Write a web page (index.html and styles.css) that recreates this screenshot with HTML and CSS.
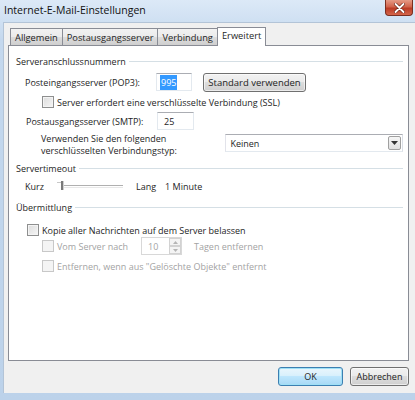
FILE: index.html
```html
<!DOCTYPE html>
<html lang="de">
<head>
    <meta charset="UTF-8">
    <title>Internet-E-Mail-Einstellungen</title>
    <link rel="stylesheet" href="styles.css">
</head>
<body>
    <div class="window">
        <div class="titlebar">
            <span class="title">Internet-E-Mail-Einstellungen</span>
            <div class="win-x">
                <svg width="11" height="10" viewBox="0 0 11 10">
                    <path d="M1.5 1 L9.5 9 M9.5 1 L1.5 9" stroke="#6b2418" stroke-width="3.2" stroke-linecap="round"/>
                    <path d="M1.5 1 L9.5 9 M9.5 1 L1.5 9" stroke="#fff" stroke-width="1.8" stroke-linecap="round"/>
                </svg>
            </div>
        </div>

        <div class="client">
            <div class="tabs">
                <div class="tab">Allgemein</div>
                <div class="tab">Postausgangsserver</div>
                <div class="tab">Verbindung</div>
                <div class="tab active">Erweitert</div>
            </div>

            <div class="panel">
                <div class="group-head h1"><span>Serveranschlussnummern</span></div>

                <div class="row pop3">
                    <span class="label w-pop">Posteingangsserver (POP3):</span>
                    <span class="textbox tb-pop"><span class="sel">995</span></span>
                    <span class="btn btn-std">Standard verwenden</span>
                </div>

                <div class="row ssl">
                    <span class="check"></span>
                    <span>Server erfordert eine verschlüsselte Verbindung (SSL)</span>
                </div>

                <div class="row smtp">
                    <span class="label w-smtp">Postausgangsserver (SMTP):</span>
                    <span class="textbox tb-smtp">25</span>
                </div>

                <div class="row verb">
                    <span class="verb-text">Verwenden Sie den folgenden<br>verschlüsselten Verbindungstyp:</span>
                    <span class="combo">
                        <span class="combo-val">Keinen</span>
                        <span class="combo-btn">
                            <svg width="7" height="4" viewBox="0 0 7 4"><path d="M0 0 H7 L3.5 4 Z" fill="#333"/></svg>
                        </span>
                    </span>
                </div>

                <div class="group-head h2"><span>Servertimeout</span></div>

                <div class="row slider-row">
                    <span class="s-kurz">Kurz</span>
                    <span class="slider">
                        <span class="track"></span>
                        <span class="tick"></span>
                        <span class="thumb"></span>
                    </span>
                    <span class="s-lang">Lang</span>
                    <span>1 Minute</span>
                </div>

                <div class="group-head h3"><span>Übermittlung</span></div>

                <div class="row kopie">
                    <span class="check"></span>
                    <span>Kopie aller Nachrichten auf dem Server belassen</span>
                </div>

                <div class="row vom disabled">
                    <span class="check off"></span>
                    <span class="w-vom">Vom Server nach</span>
                    <span class="spin">
                        <span class="spin-val">10</span>
                        <span class="spin-btns">
                            <span class="spin-b"><svg width="5" height="3" viewBox="0 0 5 3"><path d="M0 3 H5 L2.5 0 Z" fill="#b5b5b5"/></svg></span>
                            <span class="spin-b"><svg width="5" height="3" viewBox="0 0 5 3"><path d="M0 0 H5 L2.5 3 Z" fill="#b5b5b5"/></svg></span>
                        </span>
                    </span>
                    <span>Tagen entfernen</span>
                </div>

                <div class="row entf disabled">
                    <span class="check off"></span>
                    <span>Entfernen, wenn aus "Gelöschte Objekte" entfernt</span>
                </div>
            </div>

            <div class="footer">
                <span class="btn btn-ok">OK</span>
                <span class="btn btn-cancel">Abbrechen</span>
            </div>
        </div>
    </div>
</body>
</html>
```

FILE: styles.css
```css
body {
    margin: 0;
    font-family: "Open Sans", "Noto Sans", sans-serif;
    font-size: 9px;
    color: #1e1e1e;
    background: #c6d9ee;
}

.window {
    width: 415px;
    height: 400px;
    display: flex;
    flex-direction: column;
    background: linear-gradient(#dce9f7, #c4d8ee 40px, #bcd2ea);
}

.titlebar {
    height: 22px;
    position: relative;
}

.title {
    display: block;
    font-size: 10.5px;
    color: #111;
    padding: 3px 0 0 4px;
}

/* caption button sits over the title bar */
.win-x {
    position: absolute;
    top: 0;
    right: 2px;
    z-index: 5;
    width: 28px;
    height: 16px;
    box-sizing: border-box;
    border: 1px solid #7a2f21;
    border-top-width: 0;
    border-radius: 0 0 4px 4px;
    background: #c8503a linear-gradient(#e59a86, #d1634b 45%, #bb3b25 55%, #d4654a);
    display: flex;
    align-items: center;
    justify-content: center;
}

.client {
    flex: 1;
    margin: 0 0 7px 3px;
    background: #f0f0f0;
    border-top: 1px solid #b3c4d7;
    border-left: 1px solid #b3c4d7;
    display: flex;
    flex-direction: column;
}

.tabs {
    display: flex;
    margin: 4px 0 0 6px;
    height: 18px;
    align-items: flex-end;
}

.tab {
    height: 16px;
    padding: 0 4px;
    border: 1px solid #898c95;
    border-bottom: none;
    margin-right: -1px;
    background: linear-gradient(#f2f2f2, #ebebeb 50%, #dddddd 50%, #cfcfcf);
    display: flex;
    align-items: center;
    font-size: 9.3px;
}

.tab.active {
    height: 19px;
    background: #fff;
    position: relative;
    margin: 0 2px -1px 0;
    padding: 1px 4px 2px;
    align-items: flex-start;
    box-sizing: border-box;
    z-index: 1;
}

.panel {
    height: 316px;
    margin: 0 6px 0 4px;
    background: #fff;
    border: 1px solid #898c95;
    box-sizing: border-box;
    padding: 0 5px 0 7px;
}

.group-head {
    height: 13px;
    display: flex;
    align-items: center;
}

.group-head::after {
    content: "";
    flex: 1;
    border-top: 1px solid #d5dfe5;
    margin-left: 3px;
}

.h1 { margin-top: 9px; }
.h2 { margin-top: 3px; }
.h3 { margin-top: 8px; }

.row {
    display: flex;
    align-items: center;
}

.pop3 { height: 18px; margin-top: 5px; padding-left: 9px; }
.ssl { height: 14px; margin-top: 4px; padding-left: 26px; }
.smtp { height: 18px; margin-top: 3px; padding-left: 10px; }
.verb { height: 26px; margin-top: 3px; padding-left: 25px; align-items: flex-start; }
.slider-row { height: 14px; margin-top: 4px; padding-left: 9px; }
.kopie { height: 14px; margin-top: 9px; padding-left: 11px; }
.vom { height: 18px; margin-top: 0; padding-left: 26px; }
.entf { height: 14px; margin-top: 4px; padding-left: 26px; }

.w-pop { width: 131px; }
.w-smtp { width: 131px; }
.w-vom { width: 84px; }

.textbox {
    height: 18px;
    box-sizing: border-box;
    border: 1px solid #e3e9ef;
    border-top-color: #abadb3;
    display: flex;
    align-items: center;
    padding-left: 3px;
}

.tb-pop { width: 36px; }
.tb-smtp { width: 37px; padding-left: 6px; }

.sel {
    background: #3399ff;
    color: #fff;
    padding: 1px 1px;
}

.btn {
    box-sizing: border-box;
    height: 19px;
    border: 1px solid #707070;
    border-radius: 3px;
    background: linear-gradient(#f2f2f2, #ebebeb 45%, #dddddd 50%, #cfcfcf);
    display: flex;
    align-items: center;
    justify-content: center;
    box-shadow: inset 0 0 0 1px rgba(255, 255, 255, 0.6);
}

.btn-std {
    width: 103px;
    margin-left: 11px;
    font-size: 9.5px;
}

.check {
    width: 12px;
    height: 12px;
    box-sizing: border-box;
    border: 1px solid #8e8f8f;
    background: linear-gradient(135deg, #dcdcdc, #f6f6f6);
    box-shadow: inset 0 0 0 1px #f4f4f4;
    margin-right: 3px;
}

.check.off {
    border-color: #c8c8c8;
    background: #f4f4f4;
}

.verb-text {
    line-height: 12px;
    width: 187px;
}

.combo {
    width: 180px;
    height: 18px;
    box-sizing: border-box;
    border: 1px solid #abadb3;
    border-color: #abadb3 #dbdfe6 #e3e9ef #e2e3ea;
    display: flex;
    align-items: center;
    justify-content: space-between;
    margin-top: 1px;
}

.combo-val {
    padding-left: 4px;
}

.combo-btn {
    width: 13px;
    height: 14px;
    margin-right: 1px;
    border: 1px solid #a0a0a0;
    border-radius: 2px;
    box-sizing: border-box;
    background: linear-gradient(#f6f6f6, #e0e0e0);
    display: flex;
    align-items: center;
    justify-content: center;
}

.s-kurz { width: 32px; }
.s-lang { margin: 0 9px 0 13px; }

.slider {
    width: 66px;
    height: 14px;
    position: relative;
}

.track {
    position: absolute;
    left: 4px;
    right: 0;
    top: 6px;
    height: 1px;
    border-top: 1px solid #b0b0b0;
    border-bottom: 1px solid #e8e8e8;
}

.tick {
    position: absolute;
    left: 0;
    top: 3px;
    width: 5px;
    height: 2px;
    border-top: 1px solid #c8c8c8;
}

.thumb {
    position: absolute;
    left: 4px;
    top: 2px;
    width: 2px;
    height: 9px;
    background: #7a7a7a;
    border-right: 1px solid #d0d0d0;
}

.disabled {
    color: #a3a3a3;
}

.spin {
    width: 41px;
    height: 18px;
    box-sizing: border-box;
    border: 1px solid #d8d8d8;
    display: flex;
    justify-content: space-between;
    margin-right: 12px;
}

.spin-val {
    padding: 2px 0 0 6px;
}

.spin-btns {
    width: 12px;
    display: flex;
    flex-direction: column;
}

.spin-b {
    flex: 1;
    border: 1px solid #d2d2d2;
    background: #f4f4f4;
    display: flex;
    align-items: center;
    justify-content: center;
}

.footer {
    display: flex;
    justify-content: flex-end;
    margin: 6px 6px 0 0;
}

.btn-ok {
    width: 65px;
    border-color: #3c7fb1;
    box-shadow: inset 0 0 0 1px #9fe0f6;
    background: linear-gradient(#eaf6fd, #d9f0fc 45%, #bee6fd 50%, #a7d9f5);
    margin-right: 7px;
}

.btn-cancel {
    width: 59px;
}
```
